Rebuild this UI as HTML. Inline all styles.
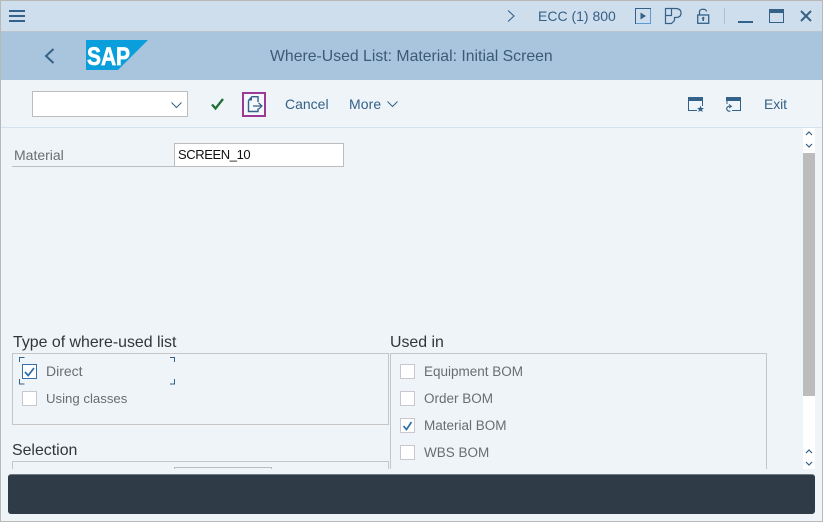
<!DOCTYPE html>
<html lang="en"><head><meta charset="utf-8"><title>Where-Used List: Material: Initial Screen</title>
<style>
*{box-sizing:border-box}
html,body{margin:0;padding:0}
body{width:823px;height:522px;position:relative;overflow:hidden;background:#eff4f9;font-family:"Liberation Sans",sans-serif}
.a{position:absolute}
.t{position:absolute;white-space:nowrap;line-height:18px}
.blue{color:#346187}
.lab{color:#6a6d70;font-size:13.5px}
.head{color:#32363a;font-size:15.900px}
.cb{position:absolute;width:15px;height:15px;background:#fff;border:1px solid #c9c6cf}
.box{position:absolute;border:1px solid #c6c6c6}
svg{position:absolute;overflow:visible}
</style></head><body>
<div class="a" style="left:0;top:0;width:823px;height:31px;background:#cfdeed"></div>
<div class="a" style="left:0;top:31px;width:823px;height:1px;background:#b9c4cf"></div>
<div class="a" style="left:0;top:32px;width:823px;height:48px;background:#a9c4dd"></div>
<div class="a" style="left:0;top:127px;width:823px;height:1px;background:#d5e1ec"></div>

<!-- top bar -->
<svg style="left:9px;top:10px" width="16" height="12"><path d="M0 1H16M0 6H16M0 11H16" stroke="#346187" stroke-width="2" fill="none"/></svg>
<svg style="left:507px;top:10px" width="8" height="12"><path d="M1 .5L7 6L1 11.500" stroke="#346187" stroke-width="1.100" fill="none"/></svg>
<div class="t blue" style="left:538px;top:7px;font-size:14px">ECC (1) 800</div>
<svg style="left:635px;top:8px" width="16" height="16"><rect x=".5" y=".5" width="15" height="15" fill="none" stroke="#346187"/><path d="M15.5 1V15.5H1" stroke="#5a9bd5" fill="none"/><path d="M5.5 4.5L11 8L5.5 11.5Z" fill="#346187"/></svg>
<svg style="left:665px;top:8px" width="17" height="16"><path d="M6.5 .5H10.500C14.500 .5 16 2.500 16 5C16 8 14 9.500 11 9.500H9.500V12.500L6.500 15.500H.5V7.500H6.500ZM.5 7.500V.5H6.500" fill="none" stroke="#346187" stroke-width="1.200"/></svg>
<svg style="left:697px;top:8px" width="13" height="16"><path d="M2.500 6.500V3.500C2.500 .5 9.500 .5 9.500 3.500" fill="none" stroke="#346187" stroke-width="1.300"/><rect x=".7" y="7" width="11" height="8.300" fill="none" stroke="#346187" stroke-width="1.300"/><path d="M6.200 8.500L8 10.500H7V13H5.400V10.500H4.400Z" fill="#346187"/></svg>
<div class="a" style="left:724px;top:8px;width:1px;height:16px;background:#b6c0c9"></div>
<div class="a" style="left:738px;top:21px;width:15px;height:2px;background:#346187"></div>
<svg style="left:769px;top:9px" width="15" height="14"><rect x=".5" y=".5" width="14" height="13" fill="none" stroke="#346187"/><rect x="0" y="0" width="15" height="4" fill="#346187"/></svg>
<svg style="left:800px;top:10px" width="12" height="12"><path d="M1 1L11 11M11 1L1 11" stroke="#346187" stroke-width="2" fill="none"/></svg>

<!-- title bar -->
<svg style="left:44px;top:48px" width="11" height="16"><path d="M9.500 1L2 8L9.500 15" stroke="#346187" stroke-width="2" fill="none"/></svg>
<svg style="left:86px;top:40px" width="62" height="30"><path d="M0 0H62L32 30H0Z" fill="#0a9edc"/><text x="1" y="25" font-family="Liberation Sans,sans-serif" font-size="25" font-weight="700" fill="#fff" stroke="#fff" stroke-width=".7" textLength="43" lengthAdjust="spacingAndGlyphs">SAP</text></svg>
<div class="t" style="left:270px;top:48px;font-size:15.800px;color:#3d5a75">Where-Used List: Material: Initial Screen</div>

<!-- toolbar -->
<div class="a" style="left:32px;top:91px;width:156px;height:26px;background:#fff;border:1px solid #bdbdbd"></div>
<svg style="left:171px;top:102px" width="11" height="6"><path d="M.5 .5L5.500 5.500L10.500 .5" stroke="#346187" stroke-width="1" fill="none"/></svg>
<svg style="left:211px;top:98px" width="13" height="12"><path d="M1 6.500L4.500 10.500L12 1" stroke="#1f6f35" stroke-width="2.300" fill="none"/></svg>
<div class="a" style="left:242px;top:92px;width:24px;height:25px;border:2px solid #9b3a96;background:#f4f7fb"></div>
<svg style="left:247px;top:96px" width="16" height="16"><path d="M1.500 4.500L5 .7H11V6M11 12.500V15.500H1.500V4.500" fill="none" stroke="#346187" stroke-width="1.400"/><path d="M1.500 4.500H5V.7Z" fill="#346187"/><path d="M6 10H15M11.500 6.800L15 10L11.500 13.200" fill="none" stroke="#346187" stroke-width="1.200"/></svg>
<div class="t blue" style="left:285px;top:95px;font-size:14px">Cancel</div>
<div class="t blue" style="left:349px;top:95px;font-size:14px;letter-spacing:.1px">More</div>
<svg style="left:387px;top:101px" width="11" height="6"><path d="M.5 .5L5.500 5.500L10.500 .5" stroke="#346187" stroke-width="1" fill="none"/></svg>
<svg style="left:688px;top:97px" width="16" height="15"><path d="M.5 0V13.500H9M14.500 0V9" fill="none" stroke="#346187"/><rect width="15" height="4" fill="#346187"/><path d="M12.500 8.500L13.500 11H16L14 12.600L14.800 15L12.500 13.600L10.200 15L11 12.600L9 11H11.500Z" fill="#346187"/></svg>
<svg style="left:726px;top:97px" width="16" height="15"><path d="M1 0V7M14.500 0V13.500H6" fill="none" stroke="#346187"/><rect width="15" height="4" fill="#346187"/><path d="M5 9.500C2 8.500 .5 10.500 .7 12C1 14 3 14.500 4.500 14" fill="none" stroke="#346187" stroke-width="1.100"/><path d="M3 7.500L5.500 9.500L3 11" fill="none" stroke="#346187"/></svg>
<div class="t blue" style="left:764px;top:95px;font-size:14px;letter-spacing:-.1px">Exit</div>

<!-- scrollbar -->
<div class="a" style="left:803px;top:128px;width:12px;height:341px;background:#fff"></div>
<div class="a" style="left:803px;top:153px;width:12px;height:243px;background:#bcbcbc"></div>
<svg style="left:805px;top:130px" width="8" height="18"><path d="M1 5L4 2L7 5M1 14L4 17L7 14" fill="none" stroke="#346187" stroke-width="1.200"/></svg>
<svg style="left:805px;top:448px" width="8" height="18"><path d="M1 5L4 2L7 5M1 14L4 17L7 14" fill="none" stroke="#346187" stroke-width="1.200"/></svg>

<!-- material -->
<div class="t lab" style="left:14px;top:146px;font-size:14px">Material</div>
<div class="a" style="left:12px;top:166px;width:162px;height:1px;background:#bdbdbd"></div>
<div class="a" style="left:174px;top:143px;width:170px;height:24px;background:#fff;border:1px solid #bdbdbd"></div>
<div class="t" style="left:178px;top:146px;font-size:13px;color:#111;letter-spacing:-.4px">SCREEN_10</div>

<!-- group boxes, clipped -->
<div class="a" style="left:0;top:128px;width:803px;height:341px;overflow:hidden">
  <div class="box" style="left:12px;top:225px;width:377px;height:72px"></div>
  <div class="box" style="left:12px;top:333px;width:377px;height:60px"></div>
  <div class="a" style="left:174px;top:339px;width:98px;height:30px;border:1px solid #bdbdbd"></div>
  <div class="box" style="left:390px;top:225px;width:377px;height:130px"></div>
</div>

<div class="t head" style="left:13px;top:334px">Type of where-used list</div>
<div class="t head" style="left:390px;top:334px">Used in</div>
<div class="t head" style="left:12px;top:442px">Selection</div>

<!-- focus brackets -->
<svg style="left:19px;top:357px" width="156" height="28"><path d="M.5 5V.5H5.500M151 .5H155.500V5M.5 22V27H5.500M151 27H155.500V22" fill="none" stroke="#346187" stroke-width="1"/></svg>

<div class="cb" style="left:22px;top:364px;border-color:#346fa8"></div>
<svg style="left:24px;top:367px" width="11" height="10"><path d="M1 5L4.200 8.500L10 1" fill="none" stroke="#2e6da4" stroke-width="1.700"/></svg>
<div class="t lab" style="left:46px;top:362px;font-size:14px">Direct</div>
<div class="cb" style="left:22px;top:391px"></div>
<div class="t lab" style="left:46px;top:390px;font-size:13.200px">Using classes</div>

<div class="cb" style="left:400px;top:364px"></div>
<div class="t lab" style="left:424px;top:363px">Equipment BOM</div>
<div class="cb" style="left:400px;top:391px"></div>
<div class="t lab" style="left:424px;top:390px">Order BOM</div>
<div class="cb" style="left:400px;top:418px"></div>
<svg style="left:402px;top:421px" width="11" height="10"><path d="M1.500 5L4.500 8.500L9.500 1" fill="none" stroke="#2e6da4" stroke-width="1.700"/></svg>
<div class="t lab" style="left:424px;top:417px">Material BOM</div>
<div class="cb" style="left:400px;top:445px"></div>
<div class="t lab" style="left:424px;top:444px">WBS BOM</div>

<!-- status bar -->
<div class="a" style="left:8px;top:474px;width:807px;height:40px;background:#2f3c48;border-top:1px solid #6f7a84;border-radius:3px"></div>

<!-- window border -->
<div class="a" style="left:0;top:0;width:823px;height:522px;border:1px solid #b8b8b8;pointer-events:none"></div>
</body></html>
